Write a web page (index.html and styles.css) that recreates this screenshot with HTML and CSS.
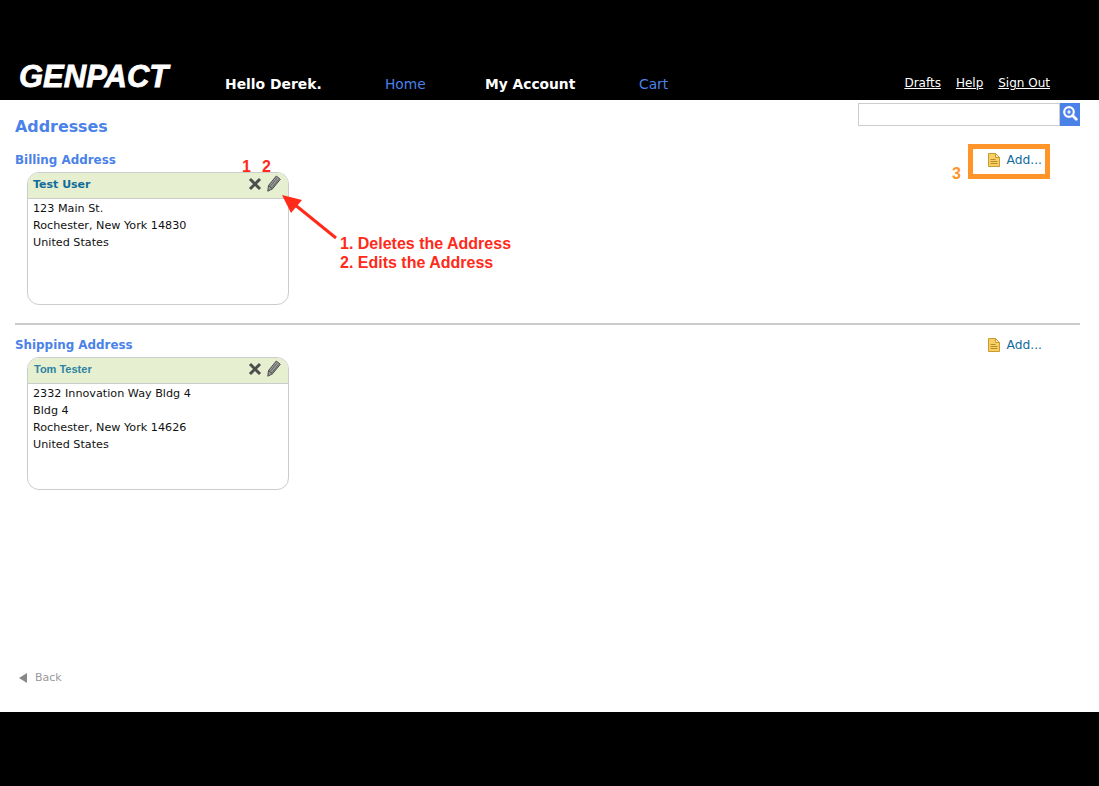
FILE: index.html
```html
<!DOCTYPE html>
<html lang="en">
<head>
  <meta charset="UTF-8">
  <meta name="viewport" content="width=device-width, initial-scale=1.0">
  <title>Addresses</title>
  <link rel="stylesheet" href="styles.css">
</head>
<body>
  <div class="header">
    <div class="logo">GENPACT</div>
    <div class="hello">Hello Derek.</div>
    <a class="nav nav-home" href="#">Home</a>
    <a class="nav nav-account" href="#">My Account</a>
    <a class="nav nav-cart" href="#">Cart</a>
    <div class="top-links">
      <a href="#">Drafts</a>
      <a href="#">Help</a>
      <a href="#">Sign Out</a>
    </div>
  </div>

  <div class="content">
    <div class="search">
      <input type="text" class="search-input">
      <button class="search-btn" aria-label="Search">
        <svg width="20" height="23" viewBox="0 0 20 23">
          <circle cx="9" cy="9" r="4.800" fill="#4a82e8" stroke="#fff" stroke-width="2.200"/>
          <path d="M7 9h4M9 7v4" stroke="#fff" stroke-width="1.200"/>
          <path d="M12.500 12.500l3.800 3.800" stroke="#fff" stroke-width="2.800" stroke-linecap="round"/>
        </svg>
      </button>
    </div>

    <h1 class="page-title">Addresses</h1>

    <div class="section section-billing">
      <div class="section-head">
        <h2>Billing Address</h2>
        <a class="add" href="#">
          <svg class="note" width="12" height="14" viewBox="0 0 12 14">
            <path d="M.5.5h7l4 4v9H.5z" fill="#f7cf62" stroke="#c99a34"/>
            <path d="M7.500.5v4h4z" fill="#fff3c4" stroke="#c99a34"/>
            <path d="M2.500 6.500h5M2.500 8.500h7M2.500 10.500h7" stroke="#b98a2a"/>
          </svg>Add...</a>
      </div>
      <div class="card">
        <div class="card-head">
          <span class="card-name">Test User</span>
          <span class="card-icons">
            <svg width="14" height="14" viewBox="0 0 14 14"><path d="M2 2l10 10M12 2L2 12" stroke="#4d4d4d" stroke-width="3"/></svg>
            <svg width="14" height="17" viewBox="0 0 14 17"><path d="M.8 16.200l.7-5.700L9.300 1l4 3.300-7.800 9.500z" fill="#9a9a9a" stroke="#4a4a4a"/><path d="M3.300 11.300l6.600-8M5 12.500l6.600-8" stroke="#555" stroke-width=".8"/><path d="M1.500 10.500l4 3.300" stroke="#4a4a4a"/></svg>
          </span>
        </div>
        <div class="card-body">
          <div>123 Main St.</div>
          <div>Rochester, New York 14830</div>
          <div>United States</div>
        </div>
      </div>
    </div>

    <div class="section section-shipping">
      <div class="section-head">
        <h2>Shipping Address</h2>
        <a class="add" href="#">
          <svg class="note" width="12" height="14" viewBox="0 0 12 14">
            <path d="M.5.5h7l4 4v9H.5z" fill="#f7cf62" stroke="#c99a34"/>
            <path d="M7.500.5v4h4z" fill="#fff3c4" stroke="#c99a34"/>
            <path d="M2.500 6.500h5M2.500 8.500h7M2.500 10.500h7" stroke="#b98a2a"/>
          </svg>Add...</a>
      </div>
      <div class="card">
        <div class="card-head">
          <span class="card-name card-name-alt">Tom Tester</span>
          <span class="card-icons">
            <svg width="14" height="14" viewBox="0 0 14 14"><path d="M2 2l10 10M12 2L2 12" stroke="#4d4d4d" stroke-width="3"/></svg>
            <svg width="14" height="17" viewBox="0 0 14 17"><path d="M.8 16.200l.7-5.700L9.300 1l4 3.300-7.800 9.500z" fill="#9a9a9a" stroke="#4a4a4a"/><path d="M3.300 11.300l6.600-8M5 12.500l6.600-8" stroke="#555" stroke-width=".8"/><path d="M1.500 10.500l4 3.300" stroke="#4a4a4a"/></svg>
          </span>
        </div>
        <div class="card-body">
          <div>2332 Innovation Way Bldg 4</div>
          <div>Bldg 4</div>
          <div>Rochester, New York 14626</div>
          <div>United States</div>
        </div>
      </div>
    </div>

    <a class="back" href="#"><span class="back-arrow"></span>Back</a>

    <!-- annotations drawn on top of the screenshot -->
    <span class="mark mark-1">1</span>
    <span class="mark mark-2">2</span>
    <svg class="arrow" width="70" height="60" viewBox="0 0 70 60">
      <path d="M56 45L14 11" stroke="#ff2a1a" stroke-width="3"/>
      <path d="M2 2l20 5-11 13z" fill="#ff2a1a"/>
    </svg>
    <div class="note-text">1. Deletes the Address<br>2. Edits the Address</div>
    <div class="add-box"></div>
    <span class="mark-3">3</span>
  </div>

  <div class="footer"></div>
</body>
</html>
```

FILE: styles.css
```css
* {
  box-sizing: border-box;
}

html, body {
  height: 100%;
}

body {
  margin: 0;
  height: 786px;
  overflow: hidden;
  background: #000;
  font-family: 'DejaVu Sans', Verdana, sans-serif;
  display: flex;
  flex-direction: column;
}

a {
  text-decoration: none;
}

.header {
  height: 100px;
  flex-shrink: 0;
  background: #000;
  display: flex;
  align-items: flex-end;
  padding: 0 49px 7px 19px;
  color: #fff;
}

.logo {
  width: 206px;
  margin-bottom: -1px;
  font-family: 'Liberation Sans', Arial, sans-serif;
  font-weight: bold;
  font-style: italic;
  font-size: 31px;
  line-height: 34px;
  -webkit-text-stroke: 0.8px #fff;
}

.hello {
  width: 160px;
  font-weight: bold;
  font-size: 13.9px;
  line-height: 18px;
}

.nav {
  font-size: 13.8px;
  line-height: 18px;
  color: #4a82e8;
}

.nav-home {
  width: 100px;
}

.nav-account {
  width: 154px;
  color: #fff;
  font-weight: bold;
}

.top-links {
  margin-left: auto;
  display: flex;
  gap: 15px;
  margin-bottom: 2px;
  font-size: 12px;
  line-height: 16px;
}

.top-links a {
  color: #fff;
  text-decoration: underline;
}

.content {
  position: relative;
  height: 612px;
  flex-shrink: 0;
  background: #fff;
  padding: 0 19px 0 15px;
}

.search {
  display: flex;
  justify-content: flex-end;
  padding-top: 3px;
}

.search-input {
  width: 202px;
  height: 23px;
  border: 1px solid #ccc;
  background: #fff;
  padding: 0;
  margin: 0;
}

.search-btn {
  width: 20px;
  height: 23px;
  border: none;
  padding: 0;
  background: #4a82e8;
}

.search-btn svg {
  display: block;
}

.page-title {
  margin: -11px 0 0;
  font-size: 15.9px;
  line-height: 24px;
  color: #4a82e8;
}

.section-billing {
  margin-top: 13px;
  padding-bottom: 18px;
  border-bottom: 2px solid #ccc;
}

.section-shipping {
  margin-top: 12px;
}

.section-head {
  display: flex;
  justify-content: space-between;
  align-items: center;
  height: 16px;
}

h2 {
  margin: 0;
  font-size: 11.9px;
  line-height: 16px;
  color: #4a82e8;
}

.add {
  display: flex;
  align-items: center;
  gap: 6px;
  padding-right: 38px;
  font-size: 12.3px;
  color: #116d9c;
}

.card {
  width: 262px;
  height: 133px;
  margin: 4px 0 0 12px;
  border: 1px solid #ccc;
  border-radius: 12px;
  overflow: hidden;
}

.card-head {
  height: 26px;
  background: #e6efcf;
  border-bottom: 1px solid #ccc;
  display: flex;
  justify-content: space-between;
  align-items: center;
  padding: 0 6px 2px 5px;
}

.card-name {
  font-size: 11px;
  font-weight: bold;
  color: #116d9c;
}

.card-name-alt {
  font-family: 'Liberation Sans', Arial, sans-serif;
  font-size: 11px;
  margin: 0 0 1px 1px;
  color: #2d83a3;
}

.card-icons {
  display: flex;
  align-items: center;
  gap: 5px;
  margin: 0 1px 2px 0;
}

.card-icons svg {
  display: block;
}

.card-body {
  padding: 1px 5px;
  font-size: 11.2px;
  line-height: 17px;
  color: #111;
}

.back {
  position: absolute;
  left: 19px;
  top: 571px;
  display: flex;
  align-items: center;
  gap: 8px;
  font-size: 11px;
  line-height: 14px;
  color: #999;
}

.back-arrow {
  width: 0;
  height: 0;
  border-top: 5px solid transparent;
  border-bottom: 5px solid transparent;
  border-right: 8px solid #888;
}

/* annotations */
.mark, .mark-3, .note-text {
  position: absolute;
  font-family: 'Liberation Sans', Arial, sans-serif;
}

.mark {
  color: #ff2a1a;
  font-size: 16px;
  font-weight: bold;
  line-height: 16px;
  top: 59px;
}

.mark-1 {
  left: 242px;
}

.mark-2 {
  left: 262px;
}

.arrow {
  position: absolute;
  left: 280px;
  top: 93px;
}

.note-text {
  left: 340px;
  top: 134px;
  color: #ff2a1a;
  font-weight: bold;
  font-size: 16px;
  line-height: 19px;
}

.add-box {
  position: absolute;
  left: 968px;
  top: 44px;
  width: 82px;
  height: 35px;
  border: 5px solid #ff9428;
}

.mark-3 {
  left: 952px;
  top: 65px;
  font-size: 16px;
  line-height: 18px;
  font-weight: bold;
  color: #ff9428;
}

.footer {
  flex: 1;
  background: #000;
}
```
